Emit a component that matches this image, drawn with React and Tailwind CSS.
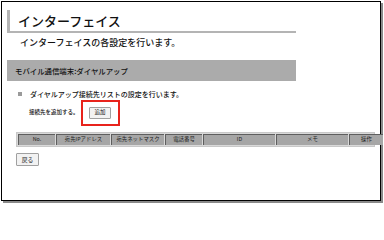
const JP = { fontFamily: '"Noto Sans CJK JP", "Noto Sans", sans-serif' }

const COLUMNS = [
  { label: 'No.', w: 'w-[37px]' },
  { label: '宛先IPアドレス', w: 'w-[54px]' },
  { label: '宛先ネットマスク', w: 'w-[53px]' },
  { label: '電話番号', w: 'w-[37px]' },
  { label: 'ID', w: 'w-[72px]' },
  { label: 'メモ', w: 'w-[72px]' },
  { label: '操作', w: 'w-[34px]' },
]

export default function App() {
  return (
    <div className="w-[384px] h-[203px] bg-white pt-[1px] pl-[1px]" style={JP}>
      <div className="w-[380px] h-[200px] border border-black shadow-[2px_2px_0_#8a8a8a] flex flex-col text-[#111]">
        {/* Title */}
        <div className="ml-[5px] mt-[8px] w-[289px] h-[23px] border-l-[3px] border-b-2 border-[#b4b4b4] flex items-center pl-[8px]">
          <h1 className="text-[13px] leading-none font-medium">インターフェイス</h1>
        </div>
        <p className="ml-[18px] mt-[4px] text-[9px] leading-[12px] font-medium">インターフェイスの各設定を行います。</p>

        {/* Section band */}
        <div className="ml-[5px] mt-[11px] w-[289px] h-[21px] bg-[#ababab] flex items-center pl-[8px]">
          <span className="text-[7.4px] leading-none font-medium">モバイル通信端末:ダイヤルアップ</span>
        </div>

        <div className="ml-[16px] mt-[8px] h-[10px] flex items-center gap-[8px]">
          <span className="w-[4px] h-[4px] bg-[#9a9a9a]" />
          <span className="text-[7px] leading-none font-medium">ダイヤルアップ接続先リストの設定を行います。</span>
        </div>

        {/* Add row */}
        <div className="ml-[27px] mt-[1px] flex items-center gap-[2px]">
          <span className="text-[5.5px] leading-none font-medium">接続先を追加する。</span>
          <div className="w-[39px] h-[26px] border-2 border-[#e8231c] flex items-center justify-center">
            <button className="w-[22px] h-[12px] border border-[#a0a0a0] rounded-[1px] bg-[#f2f2f2] text-[5.5px] leading-none">
              追加
            </button>
          </div>
        </div>

        {/* Table header */}
        <div className="ml-[14px] mt-[6px] w-[359px] h-[15px] flex border border-[#c8c8c8] bg-[#d9d9d9] p-[1px] gap-[1px]">
          {COLUMNS.map(c => (
            <div
              key={c.label}
              className={`${c.w} shrink-0 bg-[#a6a6a6] border-l border-t border-[#5e5e5e] flex items-center justify-center text-[5.4px] leading-none text-[#222]`}
            >
              {c.label}
            </div>
          ))}
        </div>

        <button className="ml-[14px] mt-[6px] w-[23px] h-[13px] border border-[#a0a0a0] rounded-[1px] bg-[#f2f2f2] text-[5.8px] leading-none">
          戻る
        </button>
      </div>
    </div>
  )
}
